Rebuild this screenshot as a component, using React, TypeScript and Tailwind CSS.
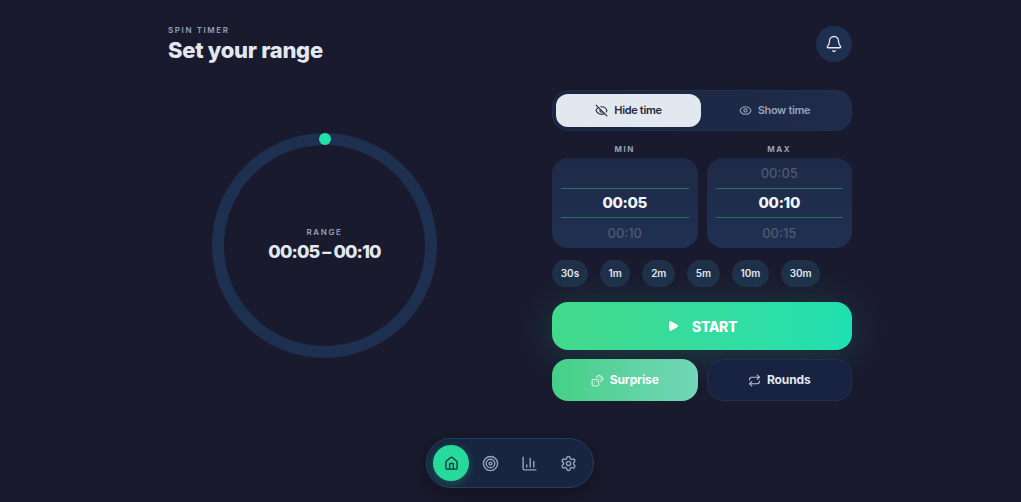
import { Bell, Eye, EyeOff, Play, Dices, Repeat, House, Target, ChartColumn, Settings } from "lucide-react";

function Wheel({ label, top, mid, bottom }: { label: string; top: string; mid: string; bottom: string }) {
  return (
    <div className="flex flex-col">
      <div className="h-[18px] pt-[2px] text-center text-[8px] leading-[14px] font-bold tracking-[0.2em] text-[#94a3b8]">{label}</div>
      <div className="relative h-[90px] rounded-2xl bg-gradient-to-b from-[#1e2a47] to-[#1f3052] px-[9px]">
        <div className="flex h-[30px] items-center justify-center pt-[1px] text-[13px] font-medium text-[#4d5a70]">{top}</div>
        <div className="flex h-[30px] items-center justify-center border-y border-[#2f6f62] pt-[1px] text-[15px] font-extrabold tracking-[-0.02em] text-[#f1f5f9]">{mid}</div>
        <div className="flex h-[30px] items-center justify-center pt-[1px] text-[13px] font-medium text-[#4d5a70]">{bottom}</div>
      </div>
    </div>
  );
}

export default function App() {
  const chips = ["30s", "1m", "2m", "5m", "10m", "30m"];
  return (
    <div className="relative h-[502px] w-[1021px] overflow-hidden bg-[#1a1a2e] font-['Inter',sans-serif]">
      <div className="ml-[168px] flex w-[684px] flex-col pt-[26px]">
        <header className="flex h-[36px] items-start justify-between">
          <div>
            <div className="text-[8px] leading-[9px] font-semibold tracking-[0.2em] text-[#94a3b8]">SPIN TIMER</div>
            <h1 className="mt-[2px] text-[22px] leading-[26px] font-extrabold tracking-[-0.013em] text-[#e2e8f0]">Set your range</h1>
          </div>
          <button className="flex h-[36px] w-[36px] items-center justify-center rounded-full bg-[#1e2f4f] text-[#e2e8f0]">
            <Bell size={18} strokeWidth={1.75} />
          </button>
        </header>

        <main className="mt-[28px] flex justify-between">
          <div className="flex w-[313px] justify-center pt-[43px]">
            <div className="relative flex h-[225px] w-[225px] flex-col items-center justify-center rounded-full border-[12px] border-[#1e3050] pb-[2px]">
              <div className="absolute top-[-12px] left-1/2 h-[12px] w-[12px] -translate-x-1/2 rounded-full bg-[#23dfa8]"></div>
              <div className="mb-[2px] text-[8px] leading-[12px] font-semibold tracking-[0.2em] text-[#94a3b8]">RANGE</div>
              <div className="text-[18px] leading-[24px] font-extrabold tracking-[-0.05em] text-[#e2e8f0]">00:05 – 00:10</div>
            </div>
          </div>

          <div className="flex w-[300px] flex-col">
            <div className="flex h-[41px] rounded-2xl border border-[#1f2f50] bg-gradient-to-r from-[#1a2540] to-[#1f2c4a] p-[3px]">
              <button className="flex w-[145px] items-center justify-center gap-[6px] rounded-xl bg-[#e2e8f0] text-[11px] font-semibold tracking-[-0.03em] text-[#1e293b]">
                <EyeOff size={13} />
                Hide time
              </button>
              <button className="flex flex-1 items-center justify-center gap-[6px] rounded-xl text-[11px] font-semibold tracking-[-0.03em] text-[#94a3b8]">
                <Eye size={13} />
                Show time
              </button>
            </div>

            <div className="mt-[9px] grid grid-cols-2 gap-[9px]">
              <Wheel label="MIN" top="" mid="00:05" bottom="00:10" />
              <Wheel label="MAX" top="00:05" mid="00:10" bottom="00:15" />
            </div>

            <div className="mt-[12px] flex gap-[12px]">
              {chips.map((c) => (
                <button key={c} className="flex h-[27px] items-center rounded-full bg-[#1f3049] px-[8.7px] text-[10px] font-semibold text-[#e2e8f0]">
                  {c}
                </button>
              ))}
            </div>

            <button className="mt-[15px] flex h-[48px] items-center justify-center gap-[13px] rounded-2xl bg-gradient-to-r from-[#43d98a] to-[#1fe0b0] text-[14px] font-extrabold tracking-[-0.03em] text-white shadow-[0_4px_40px_rgba(35,223,168,0.2)]">
              <Play size={12} fill="currentColor" />
              START
            </button>

            <div className="mt-[9px] grid grid-cols-2 gap-[9px]">
              <button className="flex h-[42px] items-center justify-center gap-[6px] rounded-2xl bg-gradient-to-r from-[#43d085] to-[#72d6b8] text-[12px] font-bold tracking-[-0.01em] text-white">
                <Dices size={13} className="opacity-75" />
                Surprise
              </button>
              <button className="flex h-[42px] items-center justify-center gap-[6px] rounded-2xl border border-[#1f3052] bg-[#172341] text-[12px] font-bold tracking-[-0.01em] text-[#e2e8f0]">
                <Repeat size={13} className="opacity-80" />
                Rounds
              </button>
            </div>
          </div>
        </main>
      </div>

      <nav className="absolute top-[438px] left-[426px] flex h-[50px] w-[168px] items-center rounded-full border border-[#23425a] bg-[#172540] pl-[6px] shadow-[0_6px_20px_rgba(0,0,0,0.35)]">
        <div className="mr-[2px] flex h-[36px] w-[36px] items-center justify-center rounded-full bg-[#27d99a] text-[#0f3d3a] shadow-[0_2px_10px_rgba(35,223,168,0.3)]">
          <House size={15} strokeWidth={2.25} />
        </div>
        <div className="flex h-[36px] w-[39px] items-center justify-center text-[#94a3b8]"><Target size={17} /></div>
        <div className="flex h-[36px] w-[39px] items-center justify-center text-[#94a3b8]"><ChartColumn size={17} /></div>
        <div className="flex h-[36px] w-[39px] items-center justify-center text-[#94a3b8]"><Settings size={17} /></div>
      </nav>
    </div>
  );
}
